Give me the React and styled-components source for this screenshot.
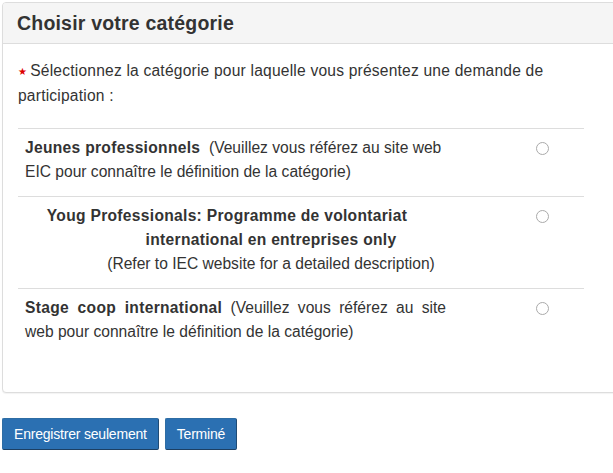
import React from 'react'
import styled, { createGlobalStyle } from 'styled-components'

const GlobalStyle = createGlobalStyle`
  html, body {
    margin: 0;
    padding: 0;
    background: #fff;
    overflow: hidden;
  }
  body {
    font-family: "Liberation Sans", Arial, sans-serif;
    font-size: 15.6px;
    color: #333;
  }
`

const Page = styled.div`
  padding: 2px 0 0 2px;
`

const Panel = styled.section`
  width: 640px;
  border: 1px solid #ddd;
  border-radius: 4px;
  background: #fff;
  margin-bottom: 25px;
  box-shadow: 0 1px 1px rgba(0, 0, 0, 0.05);
`

const PanelHeading = styled.div`
  background: #f5f5f5;
  border-bottom: 1px solid #ddd;
  border-radius: 3px 3px 0 0;
  padding: 10px 14px;
  height: 20px;
  display: flex;
  align-items: center;
`

const Title = styled.h3`
  margin: 0;
  font-size: 19.5px;
  font-weight: bold;
  letter-spacing: 0.2px;
  color: #333;
`

const PanelBody = styled.div`
  padding: 15px 15px 14px;
`

const Intro = styled.p`
  margin: 0 0 20px;
  line-height: 24px;
  width: 560px;
  letter-spacing: 0.2px;
`

const Required = styled.span`
  color: #d00;
  font-size: 10px;
  margin-right: 3px;
  vertical-align: 1px;
`

const Table = styled.div`
  width: 566px;
  margin-bottom: 22px;
`

const Row = styled.div`
  display: grid;
  grid-template-columns: 1fr 84px;
  border-top: 1px solid #ddd;
  padding: 7px 0 12px 7px;
  line-height: 24px;
`

const Label = styled.div`
  width: 421px;
  text-align: ${p => (p.$justify ? 'justify' : 'left')};
`

const CenteredLabel = styled.div`
  width: 492px;
  text-align: center;
  margin-right: -72px;
`

const Line = styled.span`
  display: block;
  padding-right: ${p => p.$shift || 0}px;
`

const RadioCell = styled.div`
  display: flex;
  justify-content: center;
  padding-top: 6px;
  grid-column: 2;
  grid-row: 1;
`

const Radio = styled.span`
  display: block;
  width: 11px;
  height: 11px;
  border-radius: 50%;
  border: 1px solid #aaa;
  background: #fff;
`

const Actions = styled.div`
  display: flex;
  gap: 6px;
`

const Button = styled.button`
  font-family: "Liberation Sans", Arial, sans-serif;
  font-size: 14px;
  color: #fff;
  background: #2b70b2;
  border: 1px solid #2e6da4;
  border-bottom-color: #1c3f63;
  border-right-color: #1f4b75;
  border-radius: 2px;
  height: 32px;
  padding: 0 11px;
  letter-spacing: -0.2px;
`

const Bold = styled.b`
  font-weight: bold;
  letter-spacing: 0.3px;
`

export default function App() {
  return (
    <Page>
      <GlobalStyle />
      <Panel>
        <PanelHeading>
          <Title>Choisir votre catégorie</Title>
        </PanelHeading>
        <PanelBody>
          <Intro>
            <Required>★</Required>
            Sélectionnez la catégorie pour laquelle vous présentez une demande de participation :
          </Intro>
          <Table>
            <Row>
              <Label>
                <Bold>Jeunes professionnels</Bold>&nbsp; (Veuillez vous référez au site web EIC pour connaître le définition de la catégorie)
              </Label>
              <RadioCell><Radio /></RadioCell>
            </Row>
            <Row>
              <CenteredLabel>
                <Line $shift={88}><Bold>Youg Professionals: Programme de volontariat</Bold></Line>
                <Line><Bold>international en entreprises only</Bold></Line>
                <Line>(Refer to IEC website for a detailed description)</Line>
              </CenteredLabel>
              <RadioCell><Radio /></RadioCell>
            </Row>
            <Row>
              <Label $justify>
                <Bold>Stage coop international</Bold> (Veuillez vous référez au site web pour connaître le définition de la catégorie)
              </Label>
              <RadioCell><Radio /></RadioCell>
            </Row>
          </Table>
        </PanelBody>
      </Panel>
      <Actions>
        <Button>Enregistrer seulement</Button>
        <Button>Terminé</Button>
      </Actions>
    </Page>
  )
}
